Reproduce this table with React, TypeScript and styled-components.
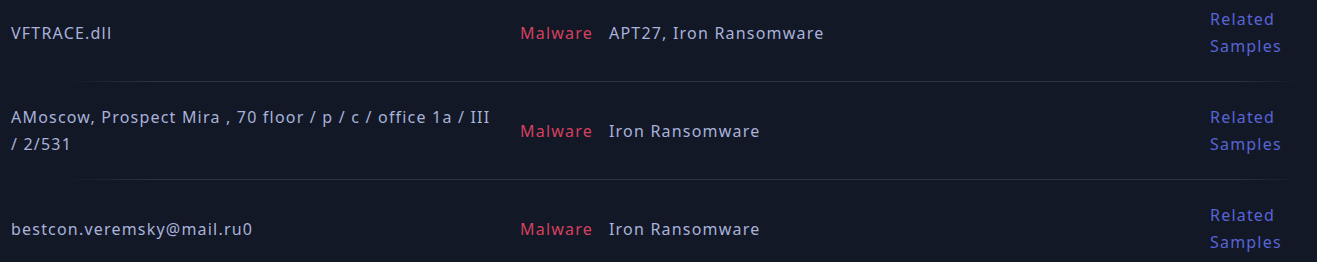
import React from 'react';
import styled, { createGlobalStyle } from 'styled-components';

const GlobalStyle = createGlobalStyle`
  html, body {
    margin: 0;
    padding: 0;
    background: #121826;
    overflow: hidden;
  }
  body {
    font-family: "Noto Sans", "Open Sans", sans-serif;
  }
`;

const List = styled.div`
  margin-top: -16px;
  display: flex;
  flex-direction: column;
`;

const Row = styled.div`
  display: grid;
  grid-template-columns: 509px 89px 1fr 92px;
  align-items: center;
  padding: 22px 15px 21px 11px;
  font-size: 16px;
  line-height: 27px;
  letter-spacing: 1.2px;
`;

const Value = styled.div`
  color: #a9b2da;
  padding-right: 22px;
`;

const Category = styled.div`
  color: #d6405f;
`;

const Actors = styled.div`
  color: #a9b2da;
  padding-right: 15px;
`;

const RelatedLink = styled.a`
  color: #5864d6;
  text-decoration: none;
  cursor: pointer;
`;

const Divider = styled.div`
  height: 1px;
  margin: 0 18px 0 66px;
  background: linear-gradient(
    90deg,
    rgba(46, 52, 70, 0) 0%,
    #2d3345 7%,
    #2d3345 95%,
    rgba(46, 52, 70, 0) 100%
  );
`;

const rows = [
  { value: 'VFTRACE.dll', category: 'Malware', actors: 'APT27, Iron Ransomware' },
  {
    value: 'AMoscow, Prospect Mira , 70 floor / p / c / office 1a / III / 2/531',
    category: 'Malware',
    actors: 'Iron Ransomware',
  },
  { value: 'bestcon.veremsky@mail.ru0', category: 'Malware', actors: 'Iron Ransomware' },
];

export default function App() {
  return (
    <>
      <GlobalStyle />
      <List>
        {rows.map((r, i) => (
          <React.Fragment key={i}>
            {i > 0 && <Divider />}
            <Row>
              <Value>{r.value}</Value>
              <Category>{r.category}</Category>
              <Actors>{r.actors}</Actors>
              <RelatedLink>Related Samples</RelatedLink>
            </Row>
          </React.Fragment>
        ))}
      </List>
    </>
  );
}
